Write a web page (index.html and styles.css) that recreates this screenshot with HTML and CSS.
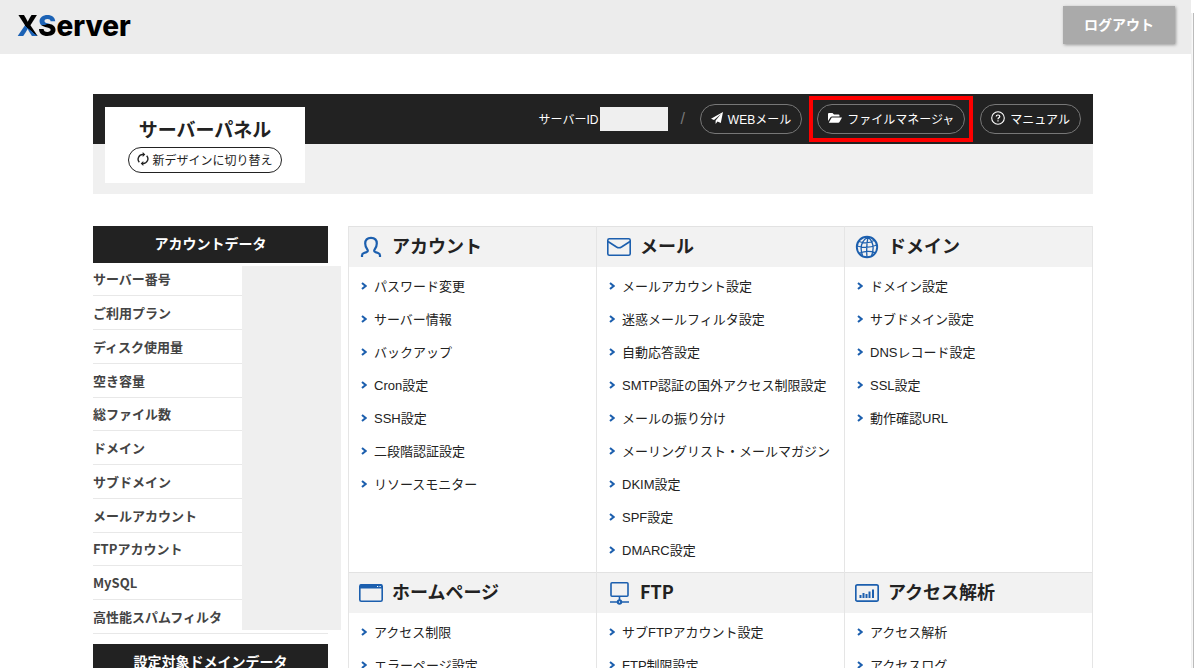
FILE: index.html
```html
<!DOCTYPE html>
<html lang="ja">
<head>
<meta charset="utf-8">
<title>サーバーパネル</title>
<link rel="stylesheet" href="styles.css">
</head>
<body>
<svg class="defs" aria-hidden="true">
  <symbol id="chevron" viewBox="0 0 6 8"><path d="M1 1l3.600 3L1 7" fill="none" stroke="#1c5fae" stroke-width="2"/></symbol>
</svg>
<div class="shell">
<div class="page">
  <header class="top">
    <a class="logo" href="#"><span class="logo-x">X</span><span class="logo-s">S</span>erver</a>
    <button class="logout" type="button">ログアウト</button>
  </header>
  <div class="content">
  <div class="container">
    <div class="banner">
      <nav class="bar">
        <label class="server" for="sid">サーバーID</label>
        <input class="sid" id="sid" type="text" readonly>
        <span class="slash">/</span>
        <a class="pill" href="#"><svg width="12" height="12" viewBox="0 0 12 12"><path d="M12 0L0 6.700l3 1.200L10 2 4.600 8.600V12l1.900-2.400 3.300 1.500z" fill="#fff"/></svg>WEBメール</a>
        <span class="marked"><a class="pill" href="#"><svg width="14" height="12" viewBox="0 0 14 12"><path d="M0 9V2q0-1 1-1h3.500L6 2.500h4.500q1 0 1 1v1H4Q3 4.500 2.500 5.200z" fill="#fff"/><path d="M3.700 5.500H14L11.500 10q-.4.700-1.200.700H.8z" fill="#fff"/></svg>ファイルマネージャ</a></span>
        <a class="pill" href="#"><svg width="14" height="14" viewBox="0 0 14 14" fill="none" stroke="#fff"><circle cx="7" cy="7" r="6.300" stroke-width="1.100"/><path d="M5.200 5.600Q5.200 4 7 4t1.800 1.500Q8.800 6.300 7.700 6.900 7 7.300 7 8.200M7 9.300v1.300" stroke-width="1.200"/></svg>マニュアル</a>
      </nav>
      <div class="panel-name">
        <h1>サーバーパネル</h1>
        <button class="switch" type="button"><svg width="12" height="14" viewBox="0 0 12 14" fill="none" stroke="#222" stroke-width="1.400"><path d="M2.300 10.300A4.700 4.700 0 0 1 6 2.500M9.700 3.700A4.700 4.700 0 0 1 6 11.500"/><path d="M5.700 0v5l2.600-2.500zM6.300 9v5l-2.600-2.500z" fill="#222" stroke="none"/></svg>新デザインに切り替え</button>
      </div>
    </div>
    <div class="columns">
      <aside class="side">
        <h2>アカウントデータ</h2>
        <div class="data">
          <table>
            <tr><th>サーバー番号</th></tr>
            <tr><th>ご利用プラン</th></tr>
            <tr><th>ディスク使用量</th></tr>
            <tr><th>空き容量</th></tr>
            <tr><th>総ファイル数</th></tr>
            <tr><th>ドメイン</th></tr>
            <tr><th>サブドメイン</th></tr>
            <tr><th>メールアカウント</th></tr>
            <tr><th>FTPアカウント</th></tr>
            <tr><th>MySQL</th></tr>
            <tr><th>高性能スパムフィルタ</th></tr>
          </table>
          <div class="mask"></div>
        </div>
        <h2>設定対象ドメインデータ</h2>
      </aside>
      <main class="menu">
        <section>
          <h2><svg width="24" height="24" viewBox="0 0 24 24" fill="none" stroke="#1c5fae" stroke-width="2.200"><path d="M3 22v-1.500q0-1.800 2-2.500l2.500-.9q1.900-.8 1-2.400Q6.200 12 6.200 8.500 6.200 2.800 12 2.800t5.800 5.700q0 3.500-2.300 6.200-.9 1.600 1 2.400l2.500.9q2 .7 2 2.500V22"/></svg>アカウント</h2>
          <ul>
            <li><a href="#"><svg><use href="#chevron"/></svg>パスワード変更</a></li>
            <li><a href="#"><svg><use href="#chevron"/></svg>サーバー情報</a></li>
            <li><a href="#"><svg><use href="#chevron"/></svg>バックアップ</a></li>
            <li><a href="#"><svg><use href="#chevron"/></svg>Cron設定</a></li>
            <li><a href="#"><svg><use href="#chevron"/></svg>SSH設定</a></li>
            <li><a href="#"><svg><use href="#chevron"/></svg>二段階認証設定</a></li>
            <li><a href="#"><svg><use href="#chevron"/></svg>リソースモニター</a></li>
          </ul>
        </section>
        <section>
          <h2><svg width="24" height="24" viewBox="0 0 24 24" fill="none" stroke="#1c5fae" stroke-width="1.600"><rect x=".8" y="3.800" width="22.400" height="16.400" rx="1.500"/><path d="M1 6.500l8.500 5.500q2.500 1.500 5 0L23 6.500"/></svg>メール</h2>
          <ul>
            <li><a href="#"><svg><use href="#chevron"/></svg>メールアカウント設定</a></li>
            <li><a href="#"><svg><use href="#chevron"/></svg>迷惑メールフィルタ設定</a></li>
            <li><a href="#"><svg><use href="#chevron"/></svg>自動応答設定</a></li>
            <li><a href="#"><svg><use href="#chevron"/></svg>SMTP認証の国外アクセス制限設定</a></li>
            <li><a href="#"><svg><use href="#chevron"/></svg>メールの振り分け</a></li>
            <li><a href="#"><svg><use href="#chevron"/></svg>メーリングリスト・メールマガジン</a></li>
            <li><a href="#"><svg><use href="#chevron"/></svg>DKIM設定</a></li>
            <li><a href="#"><svg><use href="#chevron"/></svg>SPF設定</a></li>
            <li><a href="#"><svg><use href="#chevron"/></svg>DMARC設定</a></li>
          </ul>
        </section>
        <section>
          <h2><svg width="24" height="24" viewBox="0 0 24 24" fill="none" stroke="#1c5fae" stroke-width="1.300"><circle cx="12" cy="12" r="10.200" stroke-width="1.900"/><path d="M13 2Q11 11 12 22M13 2Q3 8 7.500 20.500M13 2q8 7 3.500 19M2 11q10 3 20-1M4 6.500q8 3 15-1M4.500 18q8-3 15.500-.5"/></svg>ドメイン</h2>
          <ul>
            <li><a href="#"><svg><use href="#chevron"/></svg>ドメイン設定</a></li>
            <li><a href="#"><svg><use href="#chevron"/></svg>サブドメイン設定</a></li>
            <li><a href="#"><svg><use href="#chevron"/></svg>DNSレコード設定</a></li>
            <li><a href="#"><svg><use href="#chevron"/></svg>SSL設定</a></li>
            <li><a href="#"><svg><use href="#chevron"/></svg>動作確認URL</a></li>
          </ul>
        </section>
        <section>
          <h2><svg width="24" height="24" viewBox="0 0 24 24" fill="none" stroke="#1c5fae" stroke-width="1.600"><rect x=".8" y="3.800" width="22.400" height="16.400" rx="1.500"/><path d="M1 3.500h22v4H1z" fill="#1c5fae" stroke="none"/><path d="M18 5.500h1.200M20.500 5.500h1.200" stroke="#fff" stroke-width="1.200"/></svg>ホームページ</h2>
          <ul>
            <li><a href="#"><svg><use href="#chevron"/></svg>アクセス制限</a></li>
            <li><a href="#"><svg><use href="#chevron"/></svg>エラーページ設定</a></li>
          </ul>
        </section>
        <section>
          <h2><svg width="24" height="24" viewBox="0 0 24 24" fill="none" stroke="#1c5fae" stroke-width="1.600"><rect x="4" y="1.800" width="17" height="13.400" rx="1"/><path d="M12.500 15v4M3 21h19"/><circle cx="12.500" cy="21" r="1.900" fill="#1c5fae"/><circle cx="12.500" cy="21" r=".7" fill="#fff" stroke="none"/></svg>FTP</h2>
          <ul>
            <li><a href="#"><svg><use href="#chevron"/></svg>サブFTPアカウント設定</a></li>
            <li><a href="#"><svg><use href="#chevron"/></svg>FTP制限設定</a></li>
          </ul>
        </section>
        <section>
          <h2><svg width="24" height="24" viewBox="0 0 24 24" fill="none" stroke="#1c5fae" stroke-width="1.700"><rect x=".8" y="3.800" width="22.400" height="16.400" rx="1.500"/><path d="M5.500 14v3M8.500 12v5M11.500 13v4M14.500 10.500V17M18 8.500V17" stroke-width="2"/></svg>アクセス解析</h2>
          <ul>
            <li><a href="#"><svg><use href="#chevron"/></svg>アクセス解析</a></li>
            <li><a href="#"><svg><use href="#chevron"/></svg>アクセスログ</a></li>
          </ul>
        </section>
      </main>
    </div>
  </div>
  </div>
</div>
<div class="scroll"></div>
</div>
</body>
</html>
```
FILE: styles.css
```css
* { box-sizing: border-box; }
body { margin: 0; background: #fff; color: #222; font: 13px "Liberation Sans", "Noto Sans CJK JP", sans-serif; }
a { color: inherit; text-decoration: none; }
h1, h2, ul { margin: 0; padding: 0; }
ul { list-style: none; }
button { font-family: inherit; cursor: pointer; }
svg { flex: none; }
.defs { display: none; }

.shell { display: flex; height: 100vh; overflow: hidden; }
.page { flex: 1; min-width: 0; }
.scroll { width: 3px; margin-top: 13px; border-left: 1px solid #f1f1f1; border-right: 1px solid #bbb; background: #f8f8f8; }

.top { display: flex; justify-content: space-between; align-items: flex-start; height: 54px; padding: 6px 16px 0 17px; background: #ececec; }
.logo { color: #000; font: 800 28px/40px Inter, sans-serif; }
.logo-x, .logo-s { color: transparent; -webkit-background-clip: text; background-clip: text; }
.logo-x { background-image: linear-gradient(40deg, #1c62b5 46%, #000 47%); }
.logo-s { background-image: linear-gradient(170deg, #1c62b5 45%, #000 46%); }
.logout { height: 38px; padding: 0 21px 2px; border: 0; background: #aaa; color: #fff; font-size: 14px; font-weight: bold; box-shadow: 1px 1px 3px #999; }

.content { padding: 40px 5px 0 0; }
.container { max-width: 1000px; margin: 0 auto; }
.banner { position: relative; height: 100px; background: #f0f0f0; }
.bar { display: flex; align-items: center; justify-content: flex-end; height: 50px; padding-right: 12px; background: #222; color: #fff; font-size: 12px; }
.server { padding-bottom: 2px; }
.sid { width: 68px; height: 24px; margin-left: 2px; padding: 0; border: 0; background: #efefef; }
.slash { margin: 0 15px 0 12px; color: #777; font-size: 16px; }
.pill { display: flex; align-items: center; gap: 5px; height: 30px; padding: 0 10px 2px; border: 1px solid #777; border-radius: 15px; }
.marked { margin: 0 7px; padding: 4px; border: 4px solid #f00; }
.panel-name { position: absolute; top: 13px; left: 12px; display: flex; flex-direction: column; align-items: center; width: 200px; height: 76px; padding-top: 10px; background: #fff; }
.panel-name h1 { font-size: 19px; line-height: 28px; }
.switch { display: flex; align-items: center; gap: 3px; height: 26px; margin-top: 2px; padding: 0 8px 2px; border: 1px solid #222; border-radius: 13px; background: #fff; color: #222; font-size: 12px; }

.columns { display: flex; gap: 20px; margin-top: 32px; }
.side { width: 235px; flex: none; }
.side h2 { height: 37px; background: #222; color: #fff; font-size: 14px; line-height: 36px; text-align: center; }
.data { position: relative; margin-bottom: 10px; }
.data table { width: 100%; border-spacing: 0; }
.data th { height: 34px; padding: 0 0 1px; border-bottom: 1px solid #e8e8e8; color: #444; font: bold 13px "Noto Sans CJK JP", sans-serif; text-align: left; }
.data tr:nth-child(4n + 1) th { height: 33px; }
.mask { position: absolute; top: 3px; right: -13px; bottom: 4px; width: 99px; background: #efefef; }

.menu { flex: 1; display: grid; grid-template-columns: repeat(3, 1fr); border-left: 1px solid #e5e5e5; }
.menu section { border-right: 1px solid #e5e5e5; }
.menu h2 { display: flex; gap: 9px; height: 41px; padding-left: 10px; border-top: 1px solid #e2e2e2; background: #f2f2f2; font: bold 18px/37px "Noto Sans CJK JP", sans-serif; }
.menu h2 svg { margin-top: 8px; }
.menu ul { padding: 2px 0 6px; }
.menu li a { display: flex; align-items: center; gap: 7px; height: 33px; padding-left: 12px; }
.menu li svg { width: 6px; height: 8px; }
```
